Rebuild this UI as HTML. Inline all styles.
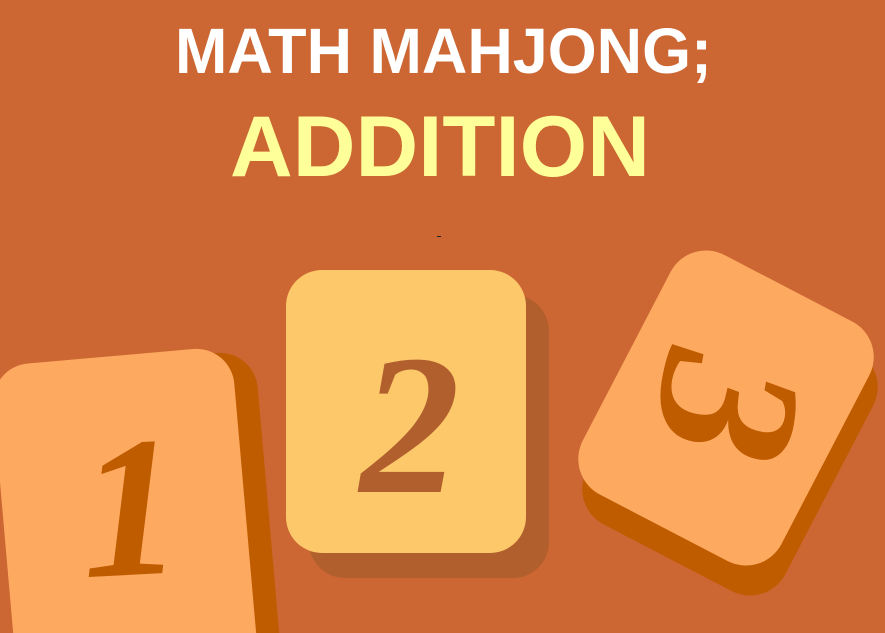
<!DOCTYPE html>
<html><head><meta charset="utf-8"><style>
html,body{margin:0;padding:0;background:#cc6633;overflow:hidden;width:885px;height:633px}
svg{display:block}
</style></head><body>
<svg width="885" height="633" viewBox="0 0 885 633" xmlns="http://www.w3.org/2000/svg">
<rect width="885" height="633" fill="#cc6633"/>
<text x="175" y="73" textLength="537" lengthAdjust="spacingAndGlyphs" font-family="Liberation Sans, sans-serif" font-weight="bold" font-size="64" fill="#ffffff">MATH MAHJONG;</text>
<text x="230" y="176" textLength="420" lengthAdjust="spacingAndGlyphs" font-family="Liberation Sans, sans-serif" font-weight="bold" font-size="86" fill="#ffff99">ADDITION</text>
<rect x="437" y="236" width="4" height="1" fill="#222"/>

<!-- tile 1 -->
<g transform="rotate(-5 120 500)">
<rect x="25" y="362" width="242" height="330" rx="38" fill="#c05c00"/>
<rect x="2" y="356" width="242" height="330" rx="38" fill="#fdaa60"/>
</g>
<text x="130" y="575" font-family="Liberation Serif, serif" font-style="italic" font-weight="bold" font-size="200" fill="#c05c00" text-anchor="middle" transform="rotate(-3 125 500)">1</text>

<!-- tile 2 -->
<rect x="309" y="295" width="240" height="283" rx="36" fill="#b05f2d"/>
<rect x="286" y="270" width="240" height="283" rx="36" fill="#fdc86a"/>
<text x="410" y="492" font-family="Liberation Serif, serif" font-style="italic" font-weight="bold" font-size="200" fill="#b05f2d" text-anchor="middle">2</text>

<!-- tile 3 -->
<g transform="translate(4 30) rotate(27.5 726 408)">
<rect x="614" y="273" width="224" height="270" rx="40" fill="#c05c00"/>
</g>
<g transform="rotate(27.5 726 408)">
<rect x="614" y="273" width="224" height="270" rx="40" fill="#fdaa60"/>
</g>
<text x="730" y="478" font-family="Liberation Serif, serif" font-style="italic" font-weight="bold" font-size="205" fill="#c05c00" text-anchor="middle" transform="rotate(100 730 408)">3</text>
</svg>
</body></html>
